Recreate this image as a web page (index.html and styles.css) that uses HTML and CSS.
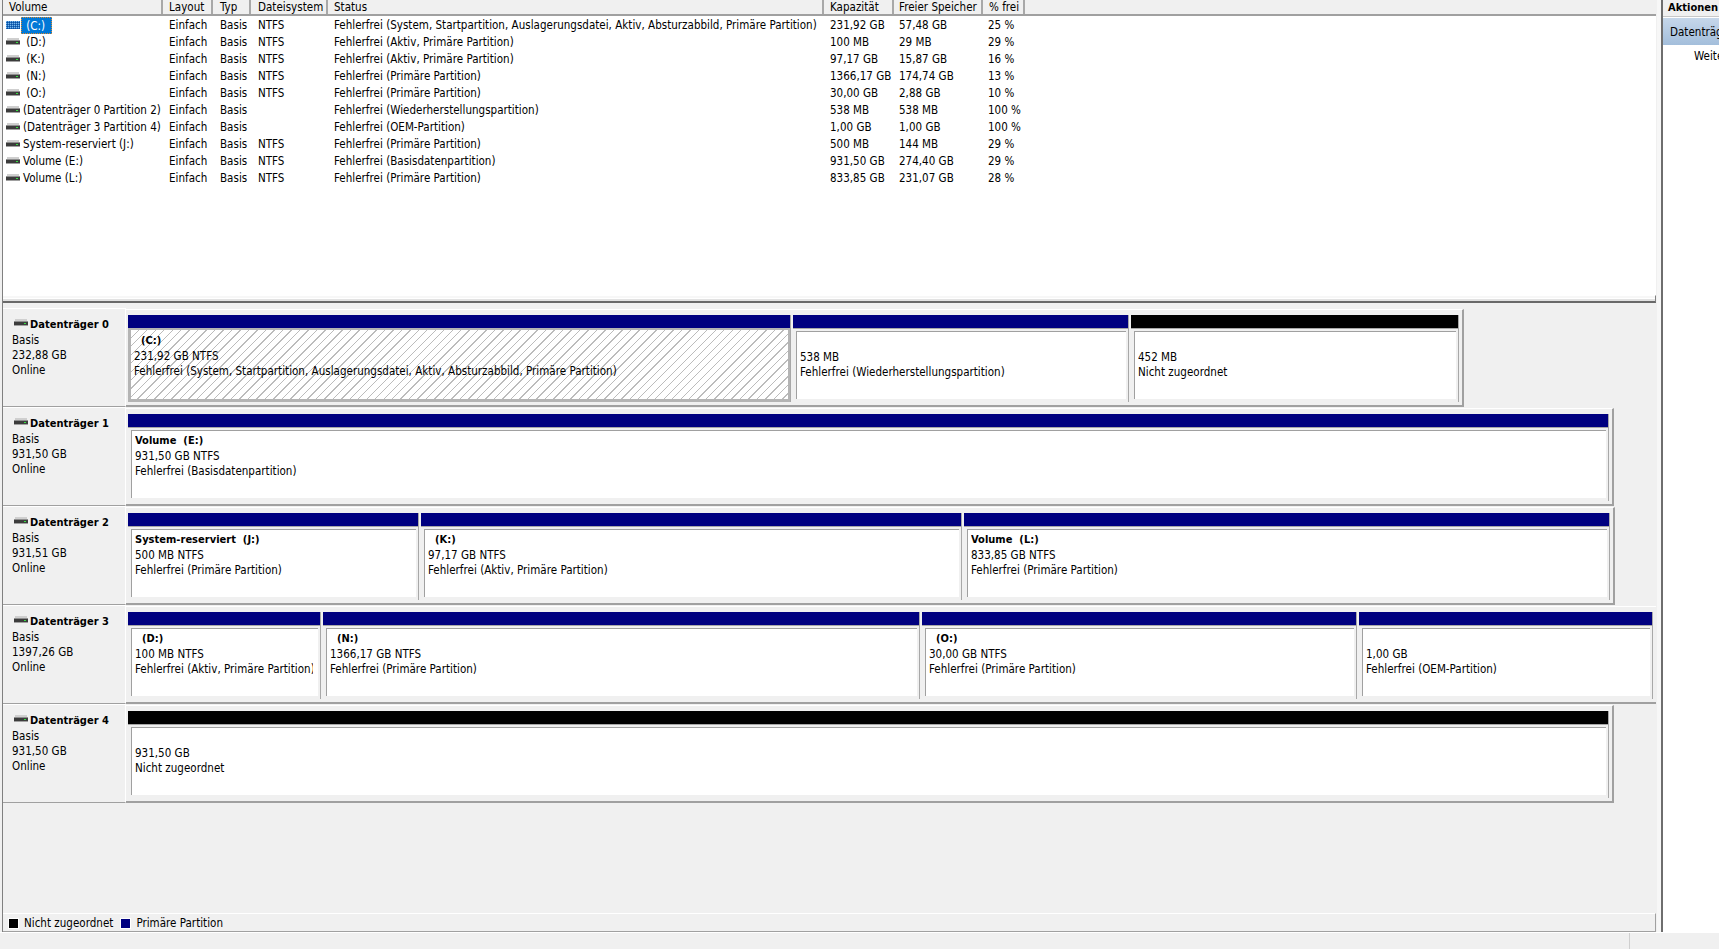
FILE: index.html
```html
<!DOCTYPE html>
<html lang="de">
<head>
<meta charset="utf-8">
<title>Datenträgerverwaltung</title>
<link rel="stylesheet" href="styles.css">
</head>
<body>
<svg class="defs" width="0" height="0" aria-hidden="true">
  <defs>
    <symbol id="disk" viewBox="0 0 14 8">
      <rect x="1" y="0" width="12" height="2" fill="#cfcfcf"/>
      <rect x="0" y="2" width="14" height="1" fill="#8f8f8f"/>
      <rect x="0" y="3" width="14" height="3" fill="#3c3c3c"/>
      <rect x="0" y="6" width="14" height="1" fill="#a0a0a0"/>
      <rect x="10" y="4" width="2" height="1" fill="#35e040"/>
    </symbol>
    <pattern id="dither" width="2" height="2" patternUnits="userSpaceOnUse">
      <rect width="2" height="2" fill="#1b6fc4"/>
      <rect width="1" height="1" fill="#7fb6e6"/>
      <rect x="1" y="1" width="1" height="1" fill="#0f4f9c"/>
    </pattern>
    <symbol id="disk-sel" viewBox="0 0 14 8">
      <rect width="14" height="8" fill="url(#dither)"/>
    </symbol>
  </defs>
</svg>
<div class="app">
  <main class="main">
    <section class="list">
      <div class="cols head">
        <div>Volume</div><div>Layout</div><div>Typ</div><div>Dateisystem</div><div>Status</div><div>Kapazität</div><div>Freier Speicher</div><div>% frei</div><div class="rest"></div>
      </div>
      <div class="cols row"><div class="vol"><svg class="ico"><use href="#disk-sel"/></svg><span class="name sel"> (C:)</span></div><div>Einfach</div><div>Basis</div><div>NTFS</div><div>Fehlerfrei (System, Startpartition, Auslagerungsdatei, Aktiv, Absturzabbild, Primäre Partition)</div><div>231,92 GB</div><div>57,48 GB</div><div>25 %</div></div>
      <div class="cols row"><div class="vol"><svg class="ico"><use href="#disk"/></svg><span class="name"> (D:)</span></div><div>Einfach</div><div>Basis</div><div>NTFS</div><div>Fehlerfrei (Aktiv, Primäre Partition)</div><div>100 MB</div><div>29 MB</div><div>29 %</div></div>
      <div class="cols row"><div class="vol"><svg class="ico"><use href="#disk"/></svg><span class="name"> (K:)</span></div><div>Einfach</div><div>Basis</div><div>NTFS</div><div>Fehlerfrei (Aktiv, Primäre Partition)</div><div>97,17 GB</div><div>15,87 GB</div><div>16 %</div></div>
      <div class="cols row"><div class="vol"><svg class="ico"><use href="#disk"/></svg><span class="name"> (N:)</span></div><div>Einfach</div><div>Basis</div><div>NTFS</div><div>Fehlerfrei (Primäre Partition)</div><div>1366,17 GB</div><div>174,74 GB</div><div>13 %</div></div>
      <div class="cols row"><div class="vol"><svg class="ico"><use href="#disk"/></svg><span class="name"> (O:)</span></div><div>Einfach</div><div>Basis</div><div>NTFS</div><div>Fehlerfrei (Primäre Partition)</div><div>30,00 GB</div><div>2,88 GB</div><div>10 %</div></div>
      <div class="cols row"><div class="vol"><svg class="ico"><use href="#disk"/></svg><span class="name">(Datenträger 0 Partition 2)</span></div><div>Einfach</div><div>Basis</div><div></div><div>Fehlerfrei (Wiederherstellungspartition)</div><div>538 MB</div><div>538 MB</div><div>100 %</div></div>
      <div class="cols row"><div class="vol"><svg class="ico"><use href="#disk"/></svg><span class="name">(Datenträger 3 Partition 4)</span></div><div>Einfach</div><div>Basis</div><div></div><div>Fehlerfrei (OEM-Partition)</div><div>1,00 GB</div><div>1,00 GB</div><div>100 %</div></div>
      <div class="cols row"><div class="vol"><svg class="ico"><use href="#disk"/></svg><span class="name">System-reserviert (J:)</span></div><div>Einfach</div><div>Basis</div><div>NTFS</div><div>Fehlerfrei (Primäre Partition)</div><div>500 MB</div><div>144 MB</div><div>29 %</div></div>
      <div class="cols row"><div class="vol"><svg class="ico"><use href="#disk"/></svg><span class="name">Volume (E:)</span></div><div>Einfach</div><div>Basis</div><div>NTFS</div><div>Fehlerfrei (Basisdatenpartition)</div><div>931,50 GB</div><div>274,40 GB</div><div>29 %</div></div>
      <div class="cols row"><div class="vol"><svg class="ico"><use href="#disk"/></svg><span class="name">Volume (L:)</span></div><div>Einfach</div><div>Basis</div><div>NTFS</div><div>Fehlerfrei (Primäre Partition)</div><div>833,85 GB</div><div>231,07 GB</div><div>28 %</div></div>
    </section>
    <div class="sash"></div>
    <section class="disks">
      <article class="disk">
        <div class="info">
          <div class="title"><svg class="ico"><use href="#disk"/></svg><b>Datenträger 0</b></div>
          <div>Basis</div><div>232,88 GB</div><div>Online</div>
        </div>
        <div class="parts">
          <div class="part prim" style="width:663px"><div class="cap"></div><div class="body selected"><div class="inner"><b>  (C:)</b><span>231,92 GB NTFS</span><span>Fehlerfrei (System, Startpartition, Auslagerungsdatei, Aktiv, Absturzabbild, Primäre Partition)</span></div></div></div>
          <div class="part prim" style="width:336px"><div class="cap"></div><div class="body"><div class="inner"><b> </b><span>538 MB</span><span>Fehlerfrei (Wiederherstellungspartition)</span></div></div></div>
          <div class="part free" style="width:328px"><div class="cap"></div><div class="body"><div class="inner"><b> </b><span>452 MB</span><span>Nicht zugeordnet</span></div></div></div>
        </div>
      </article>
      <article class="disk">
        <div class="info">
          <div class="title"><svg class="ico"><use href="#disk"/></svg><b>Datenträger 1</b></div>
          <div>Basis</div><div>931,50 GB</div><div>Online</div>
        </div>
        <div class="parts">
          <div class="part prim" style="width:1481px"><div class="cap"></div><div class="body"><div class="inner"><b>Volume  (E:)</b><span>931,50 GB NTFS</span><span>Fehlerfrei (Basisdatenpartition)</span></div></div></div>
        </div>
      </article>
      <article class="disk">
        <div class="info">
          <div class="title"><svg class="ico"><use href="#disk"/></svg><b>Datenträger 2</b></div>
          <div>Basis</div><div>931,51 GB</div><div>Online</div>
        </div>
        <div class="parts">
          <div class="part prim" style="width:291px"><div class="cap"></div><div class="body"><div class="inner"><b>System-reserviert  (J:)</b><span>500 MB NTFS</span><span>Fehlerfrei (Primäre Partition)</span></div></div></div>
          <div class="part prim" style="width:541px"><div class="cap"></div><div class="body"><div class="inner"><b>  (K:)</b><span>97,17 GB NTFS</span><span>Fehlerfrei (Aktiv, Primäre Partition)</span></div></div></div>
          <div class="part prim" style="width:646px"><div class="cap"></div><div class="body"><div class="inner"><b>Volume  (L:)</b><span>833,85 GB NTFS</span><span>Fehlerfrei (Primäre Partition)</span></div></div></div>
        </div>
      </article>
      <article class="disk">
        <div class="info">
          <div class="title"><svg class="ico"><use href="#disk"/></svg><b>Datenträger 3</b></div>
          <div>Basis</div><div>1397,26 GB</div><div>Online</div>
        </div>
        <div class="parts">
          <div class="part prim" style="width:193px"><div class="cap"></div><div class="body"><div class="inner"><b>  (D:)</b><span>100 MB NTFS</span><span>Fehlerfrei (Aktiv, Primäre Partition)</span></div></div></div>
          <div class="part prim" style="width:597px"><div class="cap"></div><div class="body"><div class="inner"><b>  (N:)</b><span>1366,17 GB NTFS</span><span>Fehlerfrei (Primäre Partition)</span></div></div></div>
          <div class="part prim" style="width:435px"><div class="cap"></div><div class="body"><div class="inner"><b>  (O:)</b><span>30,00 GB NTFS</span><span>Fehlerfrei (Primäre Partition)</span></div></div></div>
          <div class="part prim" style="width:294px"><div class="cap"></div><div class="body"><div class="inner"><b> </b><span>1,00 GB</span><span>Fehlerfrei (OEM-Partition)</span></div></div></div>
        </div>
      </article>
      <article class="disk">
        <div class="info">
          <div class="title"><svg class="ico"><use href="#disk"/></svg><b>Datenträger 4</b></div>
          <div>Basis</div><div>931,50 GB</div><div>Online</div>
        </div>
        <div class="parts">
          <div class="part free" style="width:1481px"><div class="cap"></div><div class="body"><div class="inner"><b> </b><span>931,50 GB</span><span>Nicht zugeordnet</span></div></div></div>
        </div>
      </article>
    </section>
    <footer class="legend">
      <i class="swatch black"></i><span>Nicht zugeordnet</span>
      <i class="swatch navy"></i><span>Primäre Partition</span>
    </footer>
  </main>
  <aside class="actions">
    <div class="a-head">Aktionen</div>
    <div class="a-sel">Datenträgerverwaltung</div>
    <div class="a-item">Weitere Aktionen</div>
  </aside>
</div>
<div class="status"><div class="st-a"></div><div class="st-b"></div></div>
</body>
</html>
```
FILE: styles.css
```css
* { box-sizing: border-box; }
html, body { margin: 0; padding: 0; }
body {
  width: 1719px;
  height: 949px;
  overflow: hidden;
  background: #f0f0f0;
  color: #000;
  font: 11.5px/15px "DejaVu Sans Condensed", "Liberation Sans", sans-serif;
  letter-spacing: .02px;
  display: flex;
  flex-direction: column;
}
.defs { position: absolute; }
b { font-weight: 700; font-size: 11px; }

.app { display: flex; height: 932px; flex: none; }
.main {
  width: 1654px;
  margin-left: 2px;
  border-left: 1px solid #808080;
  display: flex;
  flex-direction: column;
  flex: none;
}

/* volume list */
.list { height: 295px; background: #fff; flex: none; }
.cols {
  display: grid;
  grid-template-columns: 160px 50px 38px 77px 495px 70px 89px 42px 1fr;
}
.head {
  grid-template-columns: 160px 50px 38px 77px 496px 70px 89px 42px 1fr;
  height: 16px;
  background: #f0f0f0;
  border-bottom: 2px solid #a0a0a0;
  line-height: 14px;
}
.head > div {
  padding-left: 6px;
  border-right: 2px solid #a8a8a8;
  white-space: nowrap;
  overflow: hidden;
}
.head > div:nth-child(3), .head > div:nth-child(4) { padding-left: 7px; }
.head > div:nth-child(7) { padding-left: 5px; }
.head > .rest { border-right: 0; }
.row { height: 17px; line-height: 18px; white-space: nowrap; }
.row > div { padding-left: 6px; }
.row > div:nth-child(3), .row > div:nth-child(4), .row > div:nth-child(6) { padding-left: 7px; }
.row > .vol { padding-left: 3px; display: flex; align-items: center; }
.ico { width: 14px; height: 8px; flex: none; display: block; }
.name { padding: 0 2px; margin-left: 1px; white-space: pre; }
.name.sel {
  background: #0078d7;
  color: #fff;
  outline: 1px dotted #d98a30;
  outline-offset: -1px;
  min-width: 31px;
  height: 17px;
}

/* splitter */
.sash {
  height: 8px;
  flex: none;
  background: #f0f0f0;
  border-top: 1px solid #fff;
  border-bottom: 2px solid #696969;
  box-shadow: inset 0 2px 0 #f7f7f7, inset 0 3px 0 #fff, inset 0 5px 0 #e2e2e2;
  border-right: 1px solid #808080;
}

/* disks */
.disks { flex: 1; padding-top: 5px; min-height: 0; overflow: hidden; }
.disk { display: flex; height: 99px; }
.info {
  width: 123px;
  height: 99px;
  flex: none;
  padding: 8px 0 0 9px;
  border-top: 1px solid #fff;
  border-right: 1px solid #fff;
  border-bottom: 1px solid #a0a0a0;
  background: #f0f0f0;
}
.title { display: flex; align-items: center; height: 15px; }
.title + div { margin-top: 1px; }
.title .ico { margin: -3px 2px 0 2px; }
.parts {
  display: flex;
  height: 98px;
  margin-top: 1px;
  padding: 5px 3px 0 2px;
  border-right: 2px solid #a0a0a0;
  border-bottom: 2px solid #a0a0a0;
  box-shadow: inset -2px 0 0 #f0f0f0;
  border-top: 1px solid #fff;
}
.part {
  display: flex;
  flex-direction: column;
  flex: none;
  height: 87px;
  margin-right: 2px;
  border-right: 1px solid #a8a8a8;
}
.part:last-child { margin-right: 0; }
.cap { height: 13px; flex: none; }
.prim .cap { background: #000080; }
.free .cap { background: #000; }
.body {
  flex: 1;
  padding: 2px 2px 3px 3px;
  border-top: 1px solid #a8a8a8;
  overflow: hidden;
}
.inner {
  height: 100%;
  padding: 2px 5px 0 3px;
  background: #fff;
  border-top: 1px solid #a0a0a0;
  border-left: 1px solid #a0a0a0;
  display: flex;
  flex-direction: column;
  white-space: pre;
  overflow: hidden;
}
.inner > * { display: block; height: 15px; flex: none; overflow: hidden; }
.inner > b + span { margin-top: 1px; }
.selected {
  padding: 2px 2px 3px 3px;
  background: #b4b4b4;
  border-top: 0;
}
.selected .inner {
  border: 0;
  padding: 3px 5px 0 3px;
  background: repeating-linear-gradient(135deg, #fff 0 5px, #bcbcbc 5px 6px);
}

/* legend */
.legend {
  height: 19px;
  flex: none;
  display: flex;
  align-items: center;
  padding: 1px 0 0 5px;
  border-top: 1px solid #fff;
  border-bottom: 1px solid #a0a0a0;
  border-right: 1px solid #a0a0a0;
  white-space: nowrap;
}
.swatch {
  width: 11px;
  height: 11px;
  flex: none;
  margin-right: 5px;
  border: 1px solid #fff;
}
.swatch.black { background: #000; }
.swatch.navy { background: #000080; margin-left: 7px; }

/* actions */
.actions {
  width: 58px;
  margin-left: 5px;
  flex: none;
  background: #fff;
  border-left: 2px solid #6e6e6e;
  box-shadow: -4px 0 0 #f7f7f7;
  overflow: hidden;
  white-space: nowrap;
}
.a-head {
  height: 17px;
  padding-left: 5px;
  background: #f0f0f0;
  font-weight: 700;
  font-size: 11px;
  line-height: 15px;
  border-bottom: 1px solid #c8c8c8;
}
.a-sel {
  height: 27px;
  margin-top: 1px;
  padding-left: 7px;
  line-height: 29px;
  background: linear-gradient(#c6d7ea, #a3bedb);
}
.a-item { padding: 4px 0 0 31px; }

/* status bar */
.status {
  height: 17px;
  flex: none;
  display: flex;
  border-top: 1px solid #fff;
}
.st-a { width: 1630px; border-right: 1px solid #cfcfcf; }
.st-b { flex: 1; }
```
